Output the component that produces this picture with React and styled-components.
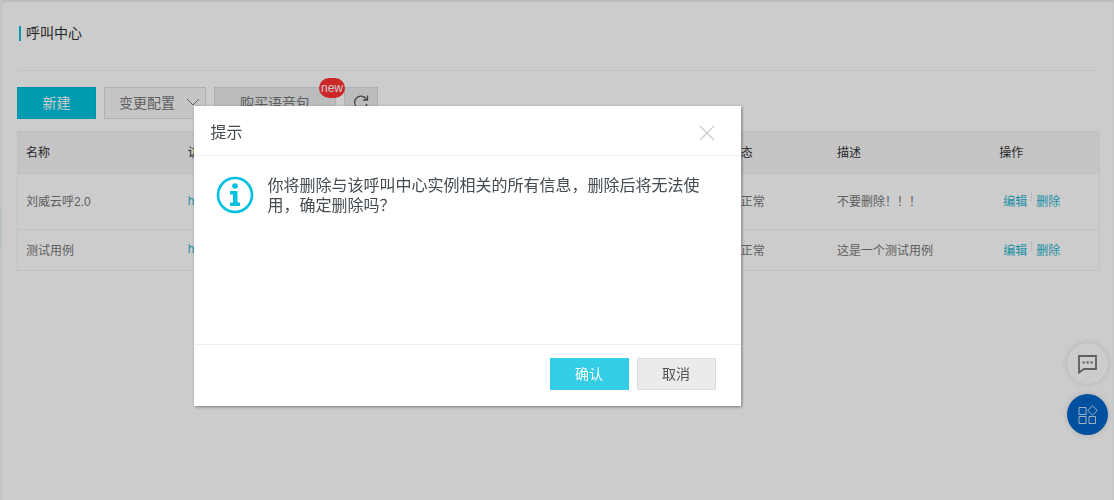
import React from "react";
import styled, { createGlobalStyle } from "styled-components";

const rows = [
  { name: "刘威云呼2.0", status: "正常", desc: "不要删除！！！", tall: true },
  { name: "测试用例", status: "正常", desc: "这是一个测试用例" },
];

function App() {
  return (
    <>
      <GlobalStyle />
      <Page>
        <SideTab />
        <PageHeader>
          <Title>呼叫中心</Title>
        </PageHeader>
        <Toolbar>
          <Button $kind="primary">新建</Button>
          <DropButton aria-haspopup="menu">
            变更配置
            <svg width="14" height="8" viewBox="0 0 14 8" fill="none" stroke="currentColor">
              <path d="M1 1L7 7L13 1" />
            </svg>
          </DropButton>
          <WideButton>
            购买语音包
            <Badge>new</Badge>
          </WideButton>
          <IconButton aria-label="刷新">
            <svg width="16" height="16" viewBox="0 0 16 16" fill="none" stroke="currentColor">
              <path d="M14 10A6.3 6.3 0 1 1 13.4 5.4" strokeWidth="1.3" />
              <path d="M14.5 1.5V6H10" strokeWidth="1.3" />
            </svg>
          </IconButton>
        </Toolbar>
        <Table>
          <colgroup>
            <col width="15%" />
            <col width="50%" />
            <col width="10%" />
            <col width="15%" />
            <col width="10%" />
          </colgroup>
          <thead>
            <tr>
              <th>名称</th>
              <th>访问地址</th>
              <th>状态</th>
              <th>描述</th>
              <th>操作</th>
            </tr>
          </thead>
          <tbody>
            {rows.map((row) => (
              <Row key={row.name} $tall={row.tall}>
                <td>{row.name}</td>
                <td>
                  <Link href="#">https</Link>
                </td>
                <td>
                  <Status>{row.status}</Status>
                </td>
                <td>{row.desc}</td>
                <td>
                  <Actions>
                    <Link href="#">编辑</Link>
                    <Divider />
                    <Link href="#">删除</Link>
                  </Actions>
                </td>
              </Row>
            ))}
          </tbody>
        </Table>
      </Page>

      <FloatBar>
        <RoundButton aria-label="咨询">
          <svg width="20" height="20" viewBox="0 0 20 20" fill="none" stroke="currentColor">
            <path d="M1 2H18V15H6L1 18.5Z" strokeWidth="1.8" />
            <path d="M4.6 7.4H6.8V9.6H4.6ZM8.5 7.4H10.7V9.6H8.5ZM12.4 7.4H14.6V9.6H12.4Z" fill="currentColor" stroke="none" />
          </svg>
        </RoundButton>
        <RoundButton $blue aria-label="应用">
          <svg width="20" height="20" viewBox="0 0 20 20" fill="none" stroke="currentColor">
            <path d="M1 2.5H8V9.5H1ZM1 11.5H8V18.5H1ZM11 11.5H17.5V18.5H11Z" />
            <path d="M14.5 0.8L19.3 5.5L14.5 10.2L9.8 5.5Z" />
          </svg>
        </RoundButton>
      </FloatBar>

      <Mask>
        <Dialog role="dialog" aria-labelledby="dialog-title">
          <DialogHeader>
            <DialogTitle id="dialog-title">提示</DialogTitle>
            <Close aria-label="关闭">
              <svg width="16" height="16" viewBox="0 0 16 16" stroke="currentColor">
                <path d="M1 1L15 15M15 1L1 15" strokeWidth="1.4" />
              </svg>
            </Close>
          </DialogHeader>
          <DialogBody>
            <InfoIcon viewBox="0 0 38 38">
              <circle cx="19" cy="19" r="17" fill="none" stroke="#00c1de" strokeWidth="2.6" />
              <circle cx="19" cy="10" r="2.8" fill="#00c1de" />
              <path d="M14 15H21.5V26.5H24V30H14V26.5H17V18.5H14Z" fill="#00c1de" />
            </InfoIcon>
            <Message>
              你将删除与该呼叫中心实例相关的所有信息，删除后将无法使用，确定删除吗？
            </Message>
          </DialogBody>
          <DialogFooter>
            <Button $kind="confirm">确认</Button>
            <Button>取消</Button>
          </DialogFooter>
        </Dialog>
      </Mask>
    </>
  );
}

export default App;

const GlobalStyle = createGlobalStyle`
  * {
    box-sizing: border-box;
  }

  body {
    margin: 0;
    background: #fff;
    color: #333;
    font-family: "Liberation Sans", "Noto Sans CJK SC", sans-serif;
    font-size: 12px;
  }

  button {
    font-family: inherit;
    cursor: pointer;
  }
`;

const Page = styled.main`
  min-height: 100vh;
  padding: 0 14px 0 15px;
  border-left: 2px solid #f5f5f5;
  box-shadow: inset 0 2px 2px #ededed;
`;

const SideTab = styled.div`
  position: absolute;
  left: 0;
  top: 208px;
  width: 1px;
  height: 40px;
  background: #d9edf2;
`;

const PageHeader = styled.header`
  height: 71px;
  padding-top: 26px;
  border-bottom: 1px solid #f4f4f4;
`;

const Title = styled.h1`
  margin: 0 0 0 2px;
  padding-left: 5px;
  border-left: 2px solid #00c1de;
  font-size: 14px;
  font-weight: normal;
  line-height: 15px;
`;

const Toolbar = styled.div`
  display: flex;
  gap: 8px;
  padding: 16px 0 12px;
`;

const kinds = {
  primary: "background: #00c1de; border-color: #00b7d3; color: #fff;",
  confirm: "background: #33cde5; border-color: #33cde5; color: #fff;",
};

const Button = styled.button`
  width: 79px;
  height: 32px;
  padding: 0 0 2px;
  border: 1px solid #ddd;
  background: #eaecec;
  color: #555;
  font-size: 14px;
  ${(props) => kinds[props.$kind]}
`;

const DropButton = styled(Button)`
  display: flex;
  align-items: center;
  justify-content: space-between;
  width: 102px;
  padding: 0 5px 2px 14px;
  background: #f7f7f7;
  color: #777;
`;

const WideButton = styled(Button)`
  position: relative;
  width: 122px;
  color: #777;
`;

const Badge = styled.span`
  position: absolute;
  top: -10px;
  right: -10px;
  height: 20px;
  padding: 0 2px;
  border-radius: 10px;
  background: #ff3333;
  color: #fff;
  font-size: 12px;
  line-height: 20px;
`;

const IconButton = styled(Button)`
  display: flex;
  align-items: center;
  justify-content: center;
  width: 34px;
`;

const Table = styled.table`
  width: 100%;
  table-layout: fixed;
  border-collapse: collapse;
  border: 1px solid #f2f2f2;

  th,
  td {
    padding: 0 8px 2px;
    text-align: left;
    font-weight: normal;
    white-space: nowrap;
  }

  th {
    height: 42px;
    background: #f5f5f5;
  }
`;

const Row = styled.tr`
  height: ${(props) => (props.$tall ? "56px" : "41px")};
  border-top: 1px solid #f2f2f2;
  color: #777;
`;

const Link = styled.a`
  color: #1fb5cf;
  text-decoration: none;
`;

const Status = styled.span`
  padding-left: 12px;
`;

const Actions = styled.div`
  display: flex;
  gap: 4px;
  padding-left: 4px;
`;

const Divider = styled.span`
  width: 1px;
  height: 10px;
  background: #e6e6e6;
`;

const FloatBar = styled.aside`
  position: fixed;
  right: 6px;
  bottom: 65px;
  display: flex;
  flex-direction: column;
  gap: 10px;
`;

const RoundButton = styled.button`
  display: flex;
  align-items: center;
  justify-content: center;
  width: 41px;
  height: 41px;
  padding: 0;
  border: none;
  border-radius: 50%;
  background: ${(props) => (props.$blue ? "#0064c8" : "#fff")};
  color: ${(props) => (props.$blue ? "#c8dff5" : "#777")};
  box-shadow: 0 0 6px rgba(0, 0, 0, 0.14);
`;

const Mask = styled.div`
  position: fixed;
  inset: 0;
  display: flex;
  align-items: flex-start;
  justify-content: center;
  padding: 106px 180px 0 0;
  background: rgba(0, 0, 0, 0.2);
`;

const Dialog = styled.section`
  width: 100%;
  max-width: 547px;
  background: #fff;
  color: #444b50;
  box-shadow: 1px 1px 3px rgba(0, 0, 0, 0.4);
`;

const DialogHeader = styled.header`
  display: flex;
  align-items: center;
  justify-content: space-between;
  height: 50px;
  padding: 0 26px 0 17px;
  border-bottom: 1px solid #eee;
`;

const DialogTitle = styled.h2`
  margin: 0;
  font-size: 16px;
  font-weight: normal;
`;

const Close = styled.button`
  display: flex;
  padding: 4px 0 0;
  border: none;
  background: none;
  color: #ccc;
`;

const DialogBody = styled.div`
  display: flex;
  align-items: flex-start;
  gap: 14px;
  min-height: 188px;
  padding: 20px 24px 20px 22px;
`;

const InfoIcon = styled.svg`
  flex: none;
  width: 38px;
  height: 38px;
`;

const Message = styled.p`
  margin: 0;
  max-width: 440px;
  font-size: 16px;
  line-height: 20px;
`;

const DialogFooter = styled.footer`
  display: flex;
  justify-content: flex-end;
  gap: 8px;
  padding: 13px 25px 16px;
  border-top: 1px solid #eee;
`;
